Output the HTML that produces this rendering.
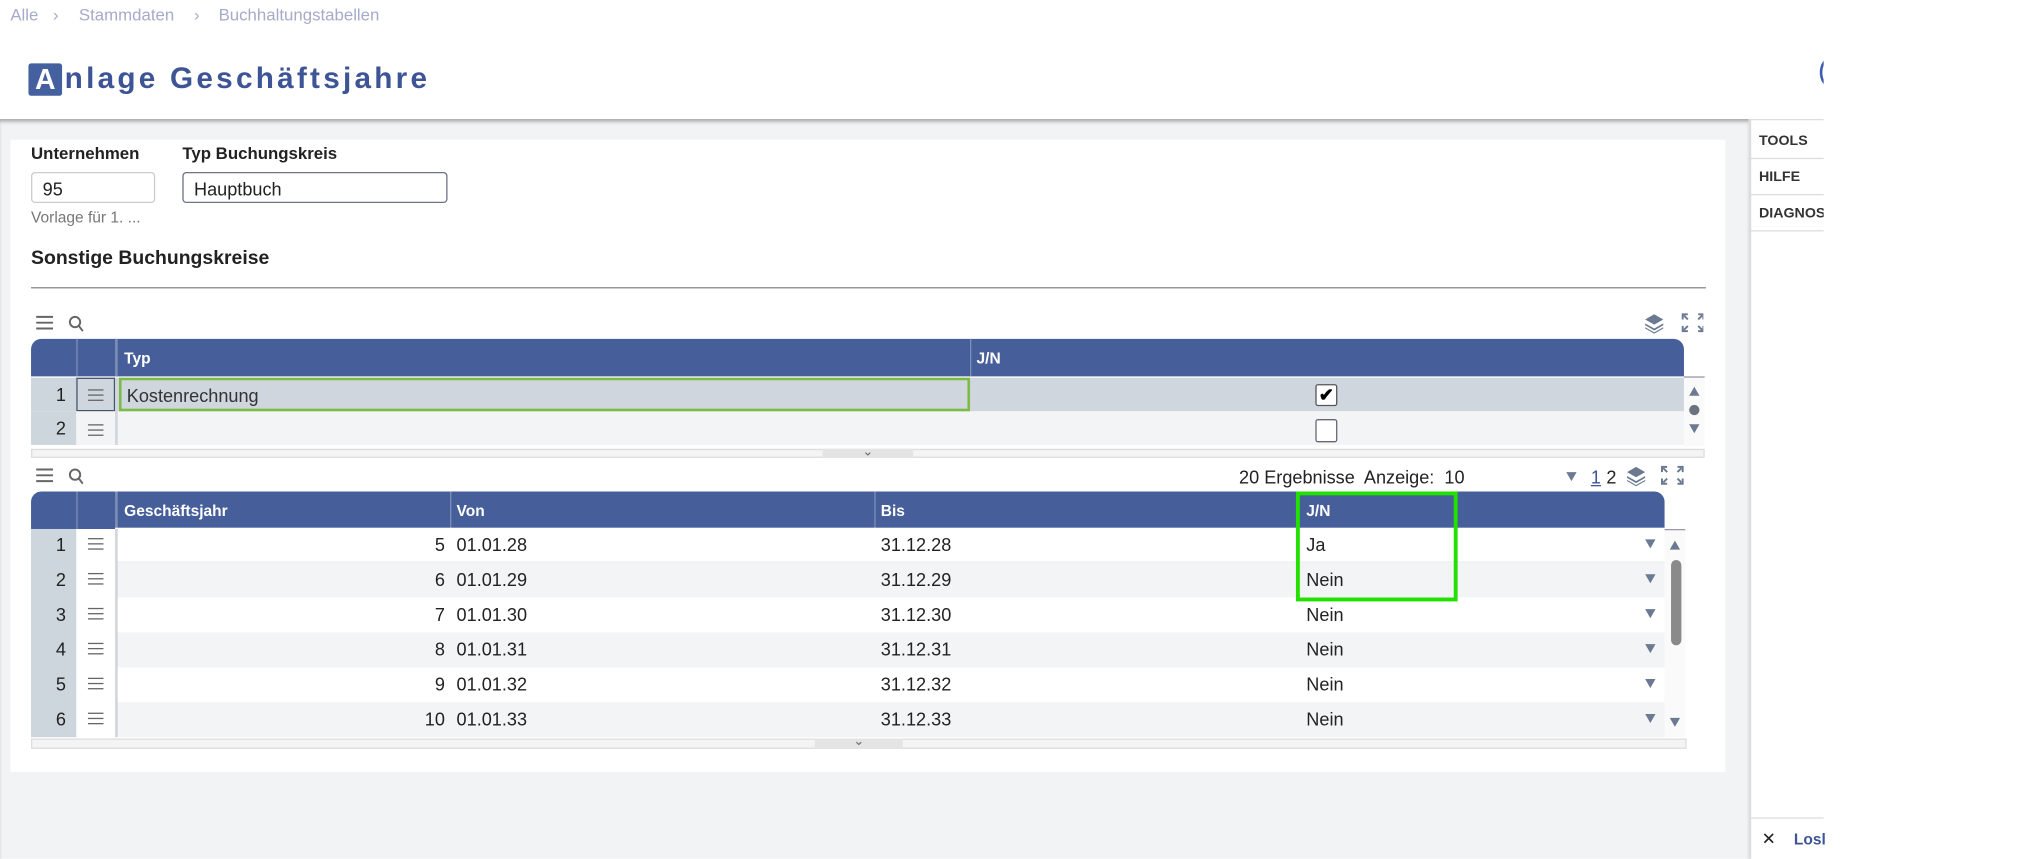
<!DOCTYPE html>
<html><head><meta charset="utf-8"><style>
*{box-sizing:border-box;margin:0;padding:0}
html,body{width:2028px;height:858px;overflow:hidden;background:#fff;font-family:"Liberation Sans",sans-serif}
#r{position:absolute;left:0;top:0;width:1568px;height:664px;transform:scale(1.29337);transform-origin:0 0;background:#fff}
.a{position:absolute}
.bc{color:#a5abc9;font-size:13px;top:4px}
.lbl{font-weight:bold;font-size:13px;color:#222;top:111px}
.inp{border:1px solid #ccc;border-radius:3px;height:24px;top:133px;font-size:14px;padding:4px 0 0 8px;color:#222;background:#fff}
.hd{background:#465f9a;color:#fff;font-weight:bold;font-size:12px}
.sb{left:1352px;width:58px;font-size:11px;font-weight:bold;color:#333;padding-left:8px;border-bottom:1px solid #ddd;height:28px;line-height:28px;overflow:hidden;white-space:nowrap}
.rn{background:#cdd5dd;font-size:14px;color:#222;text-align:right;padding-right:8px;width:35px;left:24px}
.hm{left:68px;width:12px;height:9px;border-top:1.5px solid #666;border-bottom:1.5px solid #666}
.hm:after{content:"";position:absolute;left:0;right:0;top:2.5px;border-top:1.5px solid #666}
.row{left:89px;height:27px;font-size:14px;color:#222}
.tri{width:0;height:0;border-left:4.5px solid transparent;border-right:4.5px solid transparent;border-top:7px solid #6b7a90}
</style></head><body><div id="r">
<div class="a bc" style="left:8px">Alle</div>
<div class="a bc" style="left:41px">&#x203A;</div>
<div class="a bc" style="left:61px">Stammdaten</div>
<div class="a bc" style="left:150px">&#x203A;</div>
<div class="a bc" style="left:169px">Buchhaltungstabellen</div>
<div class="a" style="left:22px;top:49px;width:26px;height:25px;background:#44609e;border-radius:2px;color:#fff;font-weight:bold;font-size:22px;text-align:center;line-height:26px">A</div>
<div class="a" style="left:50px;top:47px;font-size:23px;font-weight:bold;color:#3d5596;letter-spacing:2.5px">nlage Geschäftsjahre</div>
<div class="a" style="left:1407px;top:45px;width:14px;height:22px;border:2px solid #3d5bb0;border-radius:50%"></div>
<div class="a" style="left:1410px;top:0;width:158px;height:664px;background:#fff"></div>
<div class="a" style="left:0;top:92px;width:1352px;height:572px;background:#f2f3f5;box-shadow:inset 0 3px 3px -1px #aaa"></div>
<div class="a" style="left:1352px;top:92px;width:58px;height:572px;background:#fff;border-left:2px solid #ddd;border-top:1px solid #ddd"></div>
<div class="a sb" style="top:95px">TOOLS</div>
<div class="a sb" style="top:123px">HILFE</div>
<div class="a sb" style="top:151px">DIAGNOSE</div>
<div class="a" style="left:1354px;top:632px;width:56px;border-top:1px solid #ddd"></div>
<div class="a" style="left:1362px;top:641px;font-size:13px;color:#222">&#x2715;</div>
<div class="a" style="left:1387px;top:642px;font-size:12px;font-weight:bold;color:#3d5596">Losl</div>

<div class="a" style="left:8px;top:108px;width:1326px;height:489px;background:#fff"></div>
<div class="a lbl" style="left:24px">Unternehmen</div>
<div class="a lbl" style="left:141px">Typ Buchungskreis</div>
<div class="a inp" style="left:24px;width:96px">95</div>
<div class="a inp" style="left:141px;width:205px;border-color:#6b7385">Hauptbuch</div>
<div class="a" style="left:24px;top:161px;font-size:12px;color:#777">Vorlage für 1. ...</div>
<div class="a" style="left:24px;top:191px;font-size:15px;font-weight:bold;color:#222">Sonstige Buchungskreise</div>
<div class="a" style="left:24px;top:222px;width:1295px;border-top:1px solid #888"></div>

<svg class="a" style="left:27px;top:243px" width="40" height="14"><g stroke="#666" stroke-width="1.5"><path d="M1 2h13M1 6.5h13M1 11h13"/><circle cx="31" cy="6" r="4" fill="none"/><path d="M34 9l3 4"/></g></svg>
<svg class="a" style="left:1271px;top:242px" width="46" height="16"><g fill="#6b7a90"><path d="M8 1l7 4-7 4-7-4z"/><path d="M1 8l7 4 7-4v1.5l-7 4-7-4z"/><path d="M1 11l7 4 7-4v1l-7 4-7-4z"/></g><g stroke="#6b7a90" stroke-width="1.5" fill="none"><path d="M30 5V1h4M42 1h4v4M46 10v4h-4M34 14h-4v-4M31 2l3 3M45 2l-3 3M45 13l-3-3M31 13l3-3"/></g></svg>

<div class="a hd" style="left:24px;top:262px;width:1278px;height:29px;border-radius:8px 8px 0 0"></div>
<div class="a" style="left:59px;top:262px;width:1px;height:29px;background:#7d8fb8"></div>
<div class="a" style="left:89px;top:262px;width:2px;height:29px;background:#7d8fb8"></div>
<div class="a" style="left:750px;top:262px;width:1px;height:29px;background:#7d8fb8"></div>
<div class="a hd" style="left:96px;top:270px;background:none">Typ</div>
<div class="a hd" style="left:755px;top:270px;background:none">J/N</div>
<div class="a" style="left:89px;top:292px;width:1213px;height:26px;background:#cfd6dd"></div>
<div class="a" style="left:89px;top:318px;width:1213px;height:26px;background:#f3f4f6"></div>
<div class="a rn" style="top:292px;height:26px;padding-top:5px">1</div>
<div class="a rn" style="top:318px;height:26px;padding-top:5px">2</div>
<div class="a" style="left:59px;top:292px;width:30px;height:26px;background:#cfd6dd;border:1px solid #44546a"></div>
<div class="a" style="left:59px;top:318px;width:30px;height:26px;background:#f3f4f6"></div>
<div class="a" style="left:89px;top:292px;width:2px;height:52px;background:#d0d6dc"></div>
<div class="a hm" style="top:301px"></div>
<div class="a hm" style="top:328px"></div>
<div class="a" style="left:92px;top:292px;width:658px;height:26px;border:2px solid #7cbb45;font-size:14px;color:#333;padding:4px 0 0 4px">Kostenrechnung</div>
<div class="a" style="left:1017px;top:297px;width:17px;height:17px;border:1px solid #555;border-radius:2px;background:#fff;font-size:14px;font-weight:bold;line-height:15px;text-align:center">&#x2714;</div>
<div class="a" style="left:1017px;top:324px;width:17px;height:18px;border:1px solid #667;border-radius:2px;background:#fff"></div>
<div class="a" style="left:1302px;top:291px;width:16px;height:54px;background:#fafafa;border-top:1px solid #99a"></div>
<div class="a tri" style="left:1306px;top:299px;transform:rotate(180deg)"></div>
<div class="a" style="left:1306px;top:313px;width:8px;height:8px;border-radius:50%;background:#6b7380"></div>
<div class="a tri" style="left:1306px;top:328px"></div>
<div class="a" style="left:24px;top:347px;width:1294px;height:7px;background:#f4f4f4;border:1px solid #ddd"></div>
<div class="a" style="left:636px;top:347px;width:70px;height:7px;background:#e4e4e4;font-size:10px;line-height:6px;text-align:center;color:#666">&#x2304;</div>

<svg class="a" style="left:27px;top:361px" width="40" height="14"><g stroke="#666" stroke-width="1.5"><path d="M1 2h13M1 6.5h13M1 11h13"/><circle cx="31" cy="6" r="4" fill="none"/><path d="M34 9l3 4"/></g></svg>
<div class="a" style="left:958px;top:361px;font-size:14px;color:#222;white-space:pre">20 Ergebnisse  Anzeige:  10</div>
<div class="a tri" style="left:1211px;top:365px"></div>
<div class="a" style="left:1230px;top:361px;font-size:14px;color:#3d5596;text-decoration:underline">1</div>
<div class="a" style="left:1242px;top:361px;font-size:14px;color:#222">2</div>
<svg class="a" style="left:1257px;top:360px" width="46" height="16"><g fill="#6b7a90"><path d="M8 1l7 4-7 4-7-4z"/><path d="M1 8l7 4 7-4v1.5l-7 4-7-4z"/><path d="M1 11l7 4 7-4v1l-7 4-7-4z"/></g><g stroke="#6b7a90" stroke-width="1.5" fill="none"><path d="M28 5V1h4M40 1h4v4M44 10v4h-4M32 14h-4v-4M29 2l3 3M43 2l-3 3M43 13l-3-3M29 13l3-3"/></g></svg>

<div class="a hd" style="left:24px;top:380px;width:1263px;height:29px;border-radius:8px 8px 0 0"></div>
<div class="a" style="left:59px;top:380px;width:1px;height:29px;background:#7d8fb8"></div>
<div class="a" style="left:89px;top:380px;width:2px;height:29px;background:#7d8fb8"></div>
<div class="a" style="left:348px;top:380px;width:1px;height:29px;background:#7d8fb8"></div>
<div class="a" style="left:676px;top:380px;width:1px;height:29px;background:#7d8fb8"></div>
<div class="a hd" style="left:96px;top:388px;background:none">Geschäftsjahr</div>
<div class="a hd" style="left:353px;top:388px;background:none">Von</div>
<div class="a hd" style="left:681px;top:388px;background:none">Bis</div>
<div class="a hd" style="left:1010px;top:388px;background:none">J/N</div>

<div class="a row" style="top:408px;width:1198px;background:#fff;border-bottom:1px solid #eee"></div>
<div class="a row" style="top:435px;width:1198px;background:#f3f4f6"></div>
<div class="a row" style="top:462px;width:1198px;background:#fff"></div>
<div class="a row" style="top:489px;width:1198px;background:#f3f4f6"></div>
<div class="a row" style="top:516px;width:1198px;background:#fff"></div>
<div class="a row" style="top:543px;width:1198px;background:#f3f4f6"></div>
<div class="a" style="left:89px;top:409px;width:2px;height:161px;background:#d0d6dc"></div>

<div class="a rn" style="top:409px;height:161px;padding:0"></div>
<div class="a" style="left:24px;top:408px;width:27px;font-size:14px;text-align:right;line-height:27px;color:#222">1<br>2<br>3<br>4<br>5<br>6</div>
<div class="a hm" style="top:416px"></div><div class="a hm" style="top:443px"></div><div class="a hm" style="top:470px"></div>
<div class="a hm" style="top:497px"></div><div class="a hm" style="top:524px"></div><div class="a hm" style="top:551px"></div>
<div class="a" style="left:300px;top:408px;width:44px;font-size:14px;text-align:right;line-height:27px;color:#222">5<br>6<br>7<br>8<br>9<br>10</div>
<div class="a" style="left:353px;top:408px;font-size:14px;line-height:27px;color:#222">01.01.28<br>01.01.29<br>01.01.30<br>01.01.31<br>01.01.32<br>01.01.33</div>
<div class="a" style="left:681px;top:408px;font-size:14px;line-height:27px;color:#222">31.12.28<br>31.12.29<br>31.12.30<br>31.12.31<br>31.12.32<br>31.12.33</div>
<div class="a" style="left:1010px;top:408px;font-size:14px;line-height:27px;color:#222">Ja<br>Nein<br>Nein<br>Nein<br>Nein<br>Nein</div>
<div class="a tri" style="left:1272px;top:417px"></div><div class="a tri" style="left:1272px;top:444px"></div>
<div class="a tri" style="left:1272px;top:471px"></div><div class="a tri" style="left:1272px;top:498px"></div>
<div class="a tri" style="left:1272px;top:525px"></div><div class="a tri" style="left:1272px;top:552px"></div>
<div class="a" style="left:1002px;top:380px;width:125px;height:85px;border:3px solid #22e000"></div>

<div class="a" style="left:1287px;top:409px;width:16px;height:161px;background:#fafafa;border-top:1px solid #99a"></div>
<div class="a tri" style="left:1291px;top:418px;transform:rotate(180deg)"></div>
<div class="a" style="left:1292px;top:433px;width:8px;height:66px;border-radius:4px;background:#8a8a8a"></div>
<div class="a tri" style="left:1291px;top:555px"></div>
<div class="a" style="left:24px;top:571px;width:1280px;height:8px;background:#f4f4f4;border:1px solid #ddd"></div>
<div class="a" style="left:630px;top:571px;width:68px;height:8px;background:#e4e4e4;font-size:10px;line-height:6px;text-align:center;color:#666">&#x2304;</div>
</div></body></html>
